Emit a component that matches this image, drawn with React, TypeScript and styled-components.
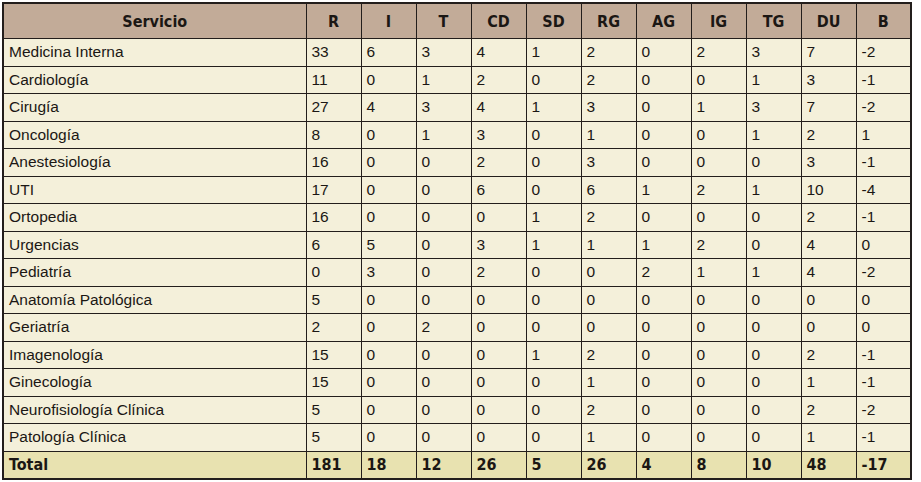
import React from "react";
import styled, { createGlobalStyle } from "styled-components";

type Row = {
  servicio: string;
  values: number[];
};

const columns = ["R", "I", "T", "CD", "SD", "RG", "AG", "IG", "TG", "DU", "B"];

const rows: Row[] = [
  { servicio: "Medicina Interna", values: [33, 6, 3, 4, 1, 2, 0, 2, 3, 7, -2] },
  { servicio: "Cardiología", values: [11, 0, 1, 2, 0, 2, 0, 0, 1, 3, -1] },
  { servicio: "Cirugía", values: [27, 4, 3, 4, 1, 3, 0, 1, 3, 7, -2] },
  { servicio: "Oncología", values: [8, 0, 1, 3, 0, 1, 0, 0, 1, 2, 1] },
  { servicio: "Anestesiología", values: [16, 0, 0, 2, 0, 3, 0, 0, 0, 3, -1] },
  { servicio: "UTI", values: [17, 0, 0, 6, 0, 6, 1, 2, 1, 10, -4] },
  { servicio: "Ortopedia", values: [16, 0, 0, 0, 1, 2, 0, 0, 0, 2, -1] },
  { servicio: "Urgencias", values: [6, 5, 0, 3, 1, 1, 1, 2, 0, 4, 0] },
  { servicio: "Pediatría", values: [0, 3, 0, 2, 0, 0, 2, 1, 1, 4, -2] },
  { servicio: "Anatomía Patológica", values: [5, 0, 0, 0, 0, 0, 0, 0, 0, 0, 0] },
  { servicio: "Geriatría", values: [2, 0, 2, 0, 0, 0, 0, 0, 0, 0, 0] },
  { servicio: "Imagenología", values: [15, 0, 0, 0, 1, 2, 0, 0, 0, 2, -1] },
  { servicio: "Ginecología", values: [15, 0, 0, 0, 0, 1, 0, 0, 0, 1, -1] },
  { servicio: "Neurofisiología Clínica", values: [5, 0, 0, 0, 0, 2, 0, 0, 0, 2, -2] },
  { servicio: "Patología Clínica", values: [5, 0, 0, 0, 0, 1, 0, 0, 0, 1, -1] },
];

const totals = [181, 18, 12, 26, 5, 26, 4, 8, 10, 48, -17];

const App = () => {
  return (
    <>
      <GlobalStyle />
      <Page>
        <Table>
          <colgroup>
            <col style={{ width: 303 }} />
            {columns.map((c) => (
              <col key={c} />
            ))}
          </colgroup>
          <thead>
            <tr>
              <HeadCell>Servicio</HeadCell>
              {columns.map((c) => (
                <HeadCell key={c}>{c}</HeadCell>
              ))}
            </tr>
          </thead>
          <tbody>
            {rows.map((row) => (
              <BodyRow key={row.servicio}>
                <Cell>{row.servicio}</Cell>
                {row.values.map((v, i) => (
                  <Cell key={i}>{v}</Cell>
                ))}
              </BodyRow>
            ))}
            <TotalRow>
              <Cell>Total</Cell>
              {totals.map((v, i) => (
                <Cell key={i}>{v}</Cell>
              ))}
            </TotalRow>
          </tbody>
        </Table>
      </Page>
    </>
  );
};

/** Styles */
const GlobalStyle = createGlobalStyle`
  html, body {
    margin: 0;
    padding: 0;
    background: #ffffff;
  }
`;

const Page = styled.div`
  padding: 2px 0 0 2px;
`;

const Table = styled.table`
  width: 910px;
  border-collapse: collapse;
  table-layout: fixed;
  border: 2px solid #231e1c;
  font-family: "Liberation Sans", Arial, sans-serif;
  color: #1b1714;
`;

const HeadCell = styled.th`
  height: 34px;
  padding: 0;
  background-color: #c2ab98;
  border: 1px solid #231e1c;
  font-family: "DejaVu Sans Condensed", "DejaVu Sans", sans-serif;
  font-stretch: condensed;
  font-weight: 700;
  font-size: 16px;
  text-align: center;
  vertical-align: middle;
`;

const Cell = styled.td`
  height: 26.5px;
  padding: 0 0 0 5px;
  border: 1px solid #231e1c;
  font-size: 15.5px;
  line-height: 18px;
  text-align: left;
  vertical-align: middle;
  white-space: nowrap;
`;

const BodyRow = styled.tr`
  background-color: #f4f0da;
`;

const TotalRow = styled.tr`
  background-color: #e8e2b0;

  td {
    font-family: "DejaVu Sans Condensed", "DejaVu Sans", sans-serif;
    font-stretch: condensed;
    font-weight: 700;
    font-size: 16px;
  }
`;

/** Exports */
export default App;
